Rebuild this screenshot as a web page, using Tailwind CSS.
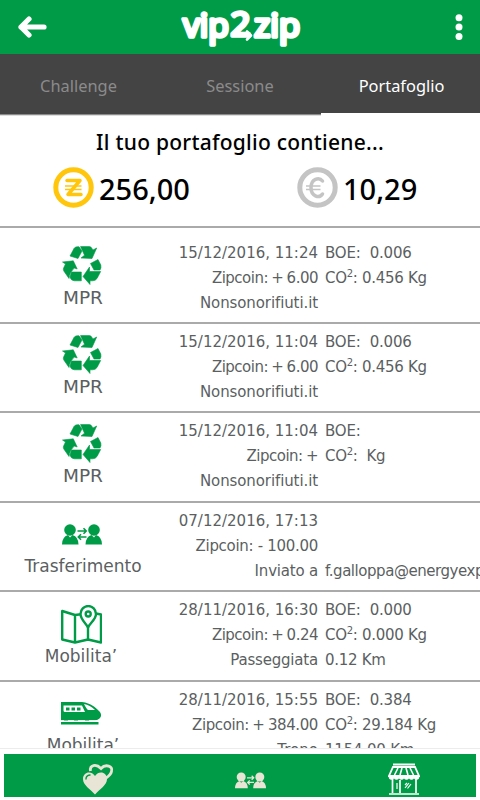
<!DOCTYPE html>
<html lang="it">
<head>
  <meta charset="UTF-8">
  <meta name="viewport" content="width=device-width, initial-scale=1.0">
  <title>vip2zip - Portafoglio</title>
  <script src="https://cdn.jsdelivr.net/npm/@tailwindcss/browser@4"></script>
</head>
<body class="bg-white w-[480px] h-[800px] overflow-hidden flex flex-col font-['Noto_Sans',sans-serif]">

  <!-- icone condivise -->
  <svg class="hidden">
    <symbol id="riciclo" viewBox="0 0 40 39">
      <g fill="#009b47" stroke="#009b47" stroke-width=".6" stroke-linejoin="round">
        <path d="M8 10 L12 2.500 Q13 .8 15 .8 H17 L20 5 L16 12.500 Z"/>
        <path d="M18.500 .6 H27.500 Q29 .6 30 2.500 L31 4 L34.700 2 L30 12.500 L19 12 L22.500 9.200 Z"/>
        <path d="M28.500 17.500 L36 13.500 L38.800 19 Q39.500 22 38 24 H32 Z"/>
        <path d="M38.700 25.500 L35 32.500 Q33.500 34.800 30.500 34.800 H28 V38.500 L21 30.500 L27.500 21 V25.500 Z"/>
        <path d="M9.500 26 H19.300 V34.800 H12.500 Q9 34.800 8 31 Z"/>
        <path d="M7 32.500 L1.800 25 Q.8 23.300 1.800 21.500 L3.500 18 L.5 16 L11.300 14.800 L15.200 23 L12.200 22 Q7.500 26.500 7 32.500 Z"/>
      </g>
    </symbol>
    <symbol id="scambio" viewBox="0 0 40 21">
      <g fill="currentColor">
        <circle cx="8" cy="6" r="5.800"/>
        <path d="M0 20.500 Q0 13 6 11 L8 13.500 L10.500 11 Q16.500 13 16.500 20.500 Z"/>
        <circle cx="32" cy="6" r="5.800"/>
        <path d="M23.500 20.500 Q23.500 13 29.500 11 L32 13.500 L34 11 Q40 13 40 20.500 Z"/>
      </g>
      <path d="M15.500 7 H24 M21.500 4.300 L24.200 7 L21.500 9.700 M24.500 13 H16.500 M19 10.300 L16.300 13 L19 15.700" fill="none" stroke="currentColor" stroke-width="1.600"/>
    </symbol>
  </svg>

  <header class="h-[54px] shrink-0 bg-[#009b47] flex items-center justify-between pl-[18px] pr-4">
    <svg class="w-[29px] h-[24px]" viewBox="0 0 29 24" fill="none" stroke="#fff" stroke-width="5.200" stroke-linecap="round" stroke-linejoin="round">
      <path d="M3 12 H26 M11 4 L3 12 L11 20"/>
    </svg>
    <svg class="w-[124px] h-[54px] mr-[22px]" viewBox="0 0 124 54">
      <g class="font-['Open_Sans',sans-serif]" fill="#fff" stroke="#fff" stroke-width="3.600" stroke-linejoin="round" font-size="32">
        <text x="5" y="36.500" textLength="46" lengthAdjust="spacingAndGlyphs">vip</text>
        <text x="52.500" y="36" textLength="20" lengthAdjust="spacingAndGlyphs">2</text>
        <text x="76" y="36.500" textLength="46" lengthAdjust="spacingAndGlyphs">zip</text>
      </g>
      <path d="M69 31.500 L73 35.500 L69 39.500" fill="none" stroke="#fff" stroke-width="2.600" stroke-linecap="round" stroke-linejoin="round"/>
    </svg>
    <svg class="w-[10px] h-[26px]" viewBox="0 0 10 26" fill="#fff">
      <circle cx="5" cy="3.700" r="3.500"/><circle cx="5" cy="13" r="3.500"/><circle cx="5" cy="22.500" r="3.500"/>
    </svg>
  </header>

  <nav class="h-[61px] shrink-0 bg-[#444] grid grid-cols-[160px_161px_159px] text-center text-[16.4px] leading-[59px] text-[#8b8b8b]">
    <div class="pt-[2px] h-[61px] border-b border-[#8a8a8a] shadow-[0_1px_#ddd] pr-[3px]">Challenge</div>
    <div class="pt-[2px] h-[61px] border-b border-[#8a8a8a] shadow-[0_1px_#ddd] pr-[1px]">Sessione</div>
    <div class="pt-[2px] h-[61px] border-b-2 border-white text-white pl-[2px]">Portafoglio</div>
  </nav>

  <section class="h-[111px] shrink-0 text-black font-medium">
    <h1 class="text-center text-[21px] leading-[30px] pt-3 tracking-[0.25px]">Il tuo portafoglio contiene...</h1>
    <div class="flex pt-2.5 text-[29px] leading-[43px]">
      <div class="w-[244px] pl-[53px] flex gap-[5px]">
        <svg class="w-[41px] h-[41px]" viewBox="0 0 41 41" fill="none" stroke="#ffc60b">
          <circle cx="20.500" cy="20.500" r="17.700" stroke-width="5"/>
          <path d="M14 13.500 H27 L15 27.500 H28" stroke-width="3.500" stroke-linejoin="round" stroke-linecap="round"/>
          <path d="M12 19 H28.500 M12 22.500 H28.500" stroke-width="1.500"/>
        </svg>
        <span>256,00</span>
      </div>
      <div class="pl-[53px] flex gap-[5px]">
        <svg class="w-[41px] h-[41px]" viewBox="0 0 41 41" fill="none" stroke="#c4c4c4">
          <circle cx="20.500" cy="20.500" r="17.700" stroke-width="5"/>
          <path d="M25.500 14 C22 9.500 14 12 14 20.500 S22 32 25.500 27" stroke-width="3.500" stroke-linecap="round"/>
          <path d="M9 19 H23.500 M9 22.500 H23.500" stroke-width="1.400"/>
        </svg>
        <span>10,29</span>
      </div>
    </div>
  </section>

  <main class="h-[522px] shrink-0 overflow-hidden text-[#5b5f62] text-[15px] leading-[25px] whitespace-nowrap font-['DejaVu_Sans',sans-serif]">
    <div class="h-[96px] border-t-2 border-[#aaa] pt-[13px] flex">
      <div class="w-[166px] shrink-0 flex flex-col items-center text-[18.5px] leading-[26px]">
        <svg class="w-[40px] h-[39px] mt-[5px] mr-[3px]"><use href="#riciclo"/></svg>
        <span>MPR</span>
      </div>
      <div class="w-[152px] shrink-0 text-right"><p class="h-[25px]">15/12/2016, 11:24</p><p class="h-[25px] tracking-[-0.5px] [word-spacing:-1px]">Zipcoin: + 6.00</p><p class="h-[25px] tracking-[-0.1px]">Nonsonorifiuti.it</p></div>
      <div class="pl-[7px]"><p class="h-[25px] tracking-[-0.2px]">BOE:&nbsp; 0.006</p><p class="h-[25px] tracking-[-0.3px]">CO<span class="relative -top-[6px] text-[10px]">2</span>: 0.456 Kg</p></div>
    </div>
    <div class="h-[89.4px] border-t-2 border-[#aaa] pt-[6px] flex">
      <div class="w-[166px] shrink-0 flex flex-col items-center text-[18.5px] leading-[26px]">
        <svg class="w-[40px] h-[39px] mt-[5px] mr-[3px]"><use href="#riciclo"/></svg>
        <span>MPR</span>
      </div>
      <div class="w-[152px] shrink-0 text-right"><p class="h-[25px]">15/12/2016, 11:04</p><p class="h-[25px] tracking-[-0.5px] [word-spacing:-1px]">Zipcoin: + 6.00</p><p class="h-[25px] tracking-[-0.1px]">Nonsonorifiuti.it</p></div>
      <div class="pl-[7px]"><p class="h-[25px] tracking-[-0.2px]">BOE:&nbsp; 0.006</p><p class="h-[25px] tracking-[-0.3px]">CO<span class="relative -top-[6px] text-[10px]">2</span>: 0.456 Kg</p></div>
    </div>
    <div class="h-[89.4px] border-t-2 border-[#aaa] pt-[6px] flex">
      <div class="w-[166px] shrink-0 flex flex-col items-center text-[18.5px] leading-[26px]">
        <svg class="w-[40px] h-[39px] mt-[5px] mr-[3px]"><use href="#riciclo"/></svg>
        <span>MPR</span>
      </div>
      <div class="w-[152px] shrink-0 text-right"><p class="h-[25px]">15/12/2016, 11:04</p><p class="h-[25px] tracking-[-0.5px] [word-spacing:-1px]">Zipcoin: +</p><p class="h-[25px] tracking-[-0.1px]">Nonsonorifiuti.it</p></div>
      <div class="pl-[7px]"><p class="h-[25px] tracking-[-0.2px]">BOE:</p><p class="h-[25px] tracking-[-0.3px]">CO<span class="relative -top-[6px] text-[10px]">2</span>:&nbsp; Kg</p></div>
    </div>
    <div class="h-[89.4px] border-t-2 border-[#aaa] pt-[6px] flex">
      <div class="w-[166px] shrink-0 flex flex-col items-center text-[17px] leading-[22px]">
        <svg class="w-[40px] h-[21px] mt-[15px] mb-[10px] mr-[3px] text-[#009b47]"><use href="#scambio"/></svg>
        <span>Trasferimento</span>
      </div>
      <div class="w-[152px] shrink-0 text-right"><p class="h-[25px]">07/12/2016, 17:13</p><p class="h-[25px] tracking-[-0.3px]">Zipcoin: - 100.00</p><p class="h-[25px] tracking-[-0.2px]">Inviato a</p></div>
      <div class="pl-[7px] pt-[50px]"><p class="h-[25px] tracking-[-0.45px]">f.galloppa@energyexp</p></div>
    </div>
    <div class="h-[89.4px] border-t-2 border-[#aaa] pt-[6px] flex">
      <div class="w-[162px] mr-1 shrink-0 flex flex-col items-center text-[17px] leading-[24px]">
        <svg class="w-[41px] h-[39px] mt-[7px]" viewBox="0 0 41 39" fill="none" stroke="#009b47" stroke-width="2.400" stroke-linejoin="round">
          <path d="M22 9 L14 10 L1.200 6 V34.500 L14 37.500 L27 34.500 L40 37.500 V9.500 L35 8.500 M14 10 V37 M27 22 V34.500"/>
          <path d="M27 22.500 C25 18 19.500 14.500 19.500 9 A7.500 7.700 0 0 1 35 9 C35 14.500 29 18 27 22.500 Z" fill="#fff"/>
          <circle cx="27.200" cy="9" r="2.500" stroke-width="2.400"/>
        </svg>
        <span>Mobilita’</span>
      </div>
      <div class="w-[152px] shrink-0 text-right"><p class="h-[25px]">28/11/2016, 16:30</p><p class="h-[25px] tracking-[-0.5px] [word-spacing:-1px]">Zipcoin: + 0.24</p><p class="h-[25px] tracking-[-0.2px]">Passeggiata</p></div>
      <div class="pl-[7px]"><p class="h-[25px] tracking-[-0.2px]">BOE:&nbsp; 0.000</p><p class="h-[25px] tracking-[-0.3px]">CO<span class="relative -top-[6px] text-[10px]">2</span>: 0.000 Kg</p><p class="h-[25px] tracking-[-0.3px]">0.12 Km</p></div>
    </div>
    <div class="h-[89.4px] border-t-2 border-[#aaa] pt-[6px] flex">
      <div class="w-[166px] shrink-0 flex flex-col items-center text-[17px] leading-[22px]">
        <svg class="w-[41px] h-[23px] mt-[14px] mb-[9px] mr-[4px]" viewBox="0 0 41 23">
          <path d="M0 0 H21 C30 1 35 6 38 9 C42 13 40 17 34 18.500 H0 Z M0 20 H37.500 V22.500 H0 Z" fill="#009b47"/>
          <path d="M2.500 3.500 H21 L24 10 H4 Q2.500 10 2.500 8.500 Z M23 2 Q29 3 34 8 H27 Q25.500 7 23 2 Z" fill="#fff"/>
          <path d="M5 5.500 h3.500 v3 h-3.500 Z M10.500 5.500 h3.500 v3 h-3.500 Z M16 5.500 h3.500 v3 h-3.500 Z" fill="#009b47"/>
          <path d="M0 18.800 H3 M7 18.800 H13 M17 18.800 H24 M28 18.800 H36" stroke="#fff" stroke-width="1.200"/>
        </svg>
        <span>Mobilita’</span>
      </div>
      <div class="w-[152px] shrink-0 text-right"><p class="h-[25px]">28/11/2016, 15:55</p><p class="h-[25px] tracking-[-0.4px] [word-spacing:-1px]">Zipcoin: + 384.00</p><p class="h-[25px]">Treno</p></div>
      <div class="pl-[7px]"><p class="h-[25px] tracking-[-0.2px]">BOE:&nbsp; 0.384</p><p class="h-[25px] tracking-[-0.3px]">CO<span class="relative -top-[6px] text-[10px]">2</span>: 29.184 Kg</p><p class="h-[25px] tracking-[-0.2px]">1154.00 Km</p></div>
    </div>
  </main>

  <footer class="h-[52px] shrink-0 border-t border-[#ececec] px-1 pt-[5px]">
    <div class="h-[43px] bg-[#009b47] flex items-center">
      <svg class="ml-[78px] w-[32px] h-[32px] mt-[6px]" viewBox="0 0 32 32">
        <path d="M8.500 8 C7.500 2 14 .5 19 5.500 C23.500 .5 31.500 3 29.500 8.500 C29 11 27 13 24 15" fill="none" stroke="#e9e5d6" stroke-width="2.800"/>
        <path d="M13 31.500 C8 26 1 22 1 16 C1 9 9 7 13 13 C17 7 25 9 25 16 C25 22 18 26 13 31.500 Z" fill="#e9e5d6"/>
        <path d="M4 16 Q4 12.500 8 12" fill="none" stroke="#009b47" stroke-width="1.400" stroke-linecap="round"/>
      </svg>
      <svg class="ml-[121px] mt-[9px] w-[31px] h-[17px] text-[#e9e5d6]"><use href="#scambio"/></svg>
      <svg class="ml-[122px] mt-[7px] w-[32px] h-[32px]" viewBox="0 0 32 32" fill="none" stroke="#fff">
        <path d="M5 1.500 H27 M5 4 H27 L31 13 H1 Z" stroke-width="1.800"/>
        <path d="M10 5 L6.500 12 M14 5 L12 12 M18 5 L20 12 M22 5 L25.500 12" stroke-width="1.600"/>
        <path d="M1 12.500 H31 V14 a2.500 2.500 0 0 1 -5 0 a2.500 2.500 0 0 1 -5 0 a2.500 2.500 0 0 1 -5 0 a2.500 2.500 0 0 1 -5 0 a2.500 2.500 0 0 1 -5 0 a2.500 2.500 0 0 1 -5 0 Z" fill="#fff" stroke-width=".6"/>
        <path d="M4.500 16 V30 M28 16 V30 M1 31 H31 M12 17 V30" stroke-width="1.700"/>
        <path d="M9 20 V26 M17 25 L21 20 M19.500 25.500 L23 21 M17 22 L19 20" stroke-width="1.200"/>
      </svg>
    </div>
  </footer>

</body>
</html>
